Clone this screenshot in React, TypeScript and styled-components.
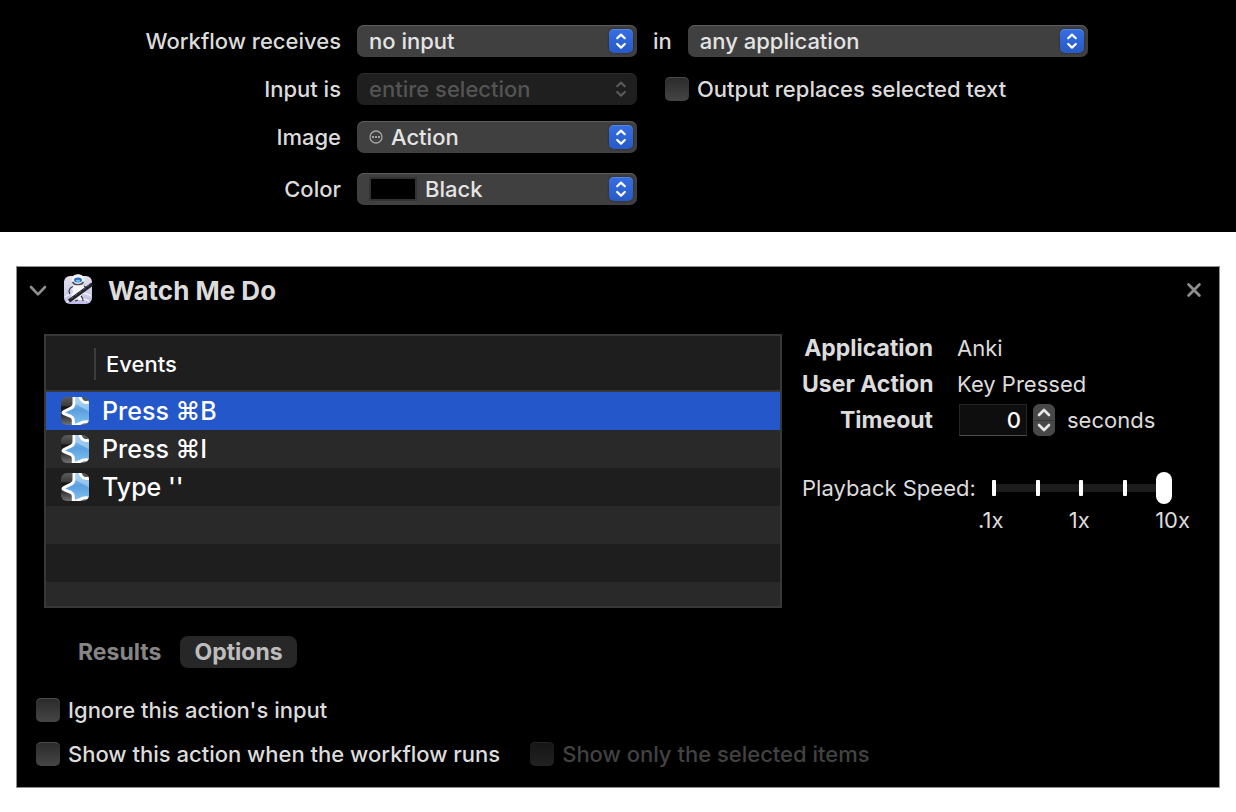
import React, { useState } from "react";
import styled, { createGlobalStyle, css } from "styled-components";

const GlobalStyle = createGlobalStyle`
  *, *::before, *::after { box-sizing: border-box; }
  body {
    margin: 0;
    background: #ffffff;
    color: #dcdcdc;
    font-family: Inter, "Noto Sans", sans-serif;
    font-size: 22px;
    font-weight: 500;
    line-height: 32px;
  }
  button, input, select { font: inherit; color: inherit; margin: 0; }
`;

/* ---------- Workflow settings ---------- */

const Settings = styled.section`
  display: flex;
  flex-direction: column;
  gap: 16px;
  padding: 25px 16px 27px 0;
  background: #000000;
`;

const SettingRow = styled.div<{ $spaced?: boolean }>`
  display: grid;
  grid-template-columns: 341px 280px 1fr;
  column-gap: 16px;
  align-items: center;
  margin-top: ${(p) => (p.$spaced ? "4px" : "0")};
`;

const SettingLabel = styled.label`
  text-align: right;
  white-space: nowrap;
`;

const InlineGroup = styled.div<{ $indent?: boolean }>`
  display: flex;
  align-items: center;
  gap: 16px;
  padding-left: ${(p) => (p.$indent ? "12px" : "0")};
`;

const PopUp = styled.div<{ $wide?: boolean }>`
  position: relative;
  width: ${(p) => (p.$wide ? "400px" : "280px")};
`;

const PopUpSelect = styled.select<{ $inset: number }>`
  appearance: none;
  display: block;
  width: 100%;
  height: 32px;
  padding: 0 40px 0 ${(p) => p.$inset}px;
  border: 0;
  border-radius: 7px;
  background: #404040;
  box-shadow: inset 0 1px 0 #5e5e5e;
  color: #e4e4e4;
  line-height: 32px;
  &:disabled {
    background: #1f1f1f;
    box-shadow: inset 0 1px 0 #2c2c2c;
    color: #545454;
    opacity: 1;
  }
`;

const PopUpBadge = styled.span<{ $disabled?: boolean }>`
  position: absolute;
  top: 4px;
  right: 4px;
  width: 24px;
  height: 24px;
  border-radius: 5px;
  pointer-events: none;
  color: #5a5a5a;
  ${(p) =>
    !p.$disabled &&
    css`
      color: #ffffff;
      background: linear-gradient(#366ee2, #275ac6);
      box-shadow: inset 0 1px 0 #5586e6, 0 0 2px #202020;
    `}
  svg { display: block; }
`;

const PopUpAdornment = styled.span`
  position: absolute;
  top: 0;
  left: 12px;
  height: 32px;
  display: flex;
  align-items: center;
  pointer-events: none;
`;

const Swatch = styled.span`
  width: 48px;
  height: 24px;
  border: 2px solid #333333;
  background: #000000;
`;

/* ---------- Action card ---------- */

const Card = styled.section`
  margin: 34px 16px 24px;
  padding-bottom: 17px;
  border: 1px solid #8e8e8e;
  background: #000000;
`;

const CardHeader = styled.header`
  display: flex;
  align-items: center;
  height: 48px;
  padding: 0 15px 0 11px;
`;

const IconButton = styled.button`
  display: flex;
  padding: 0;
  border: 0;
  background: none;
  color: #8f8f8f;
`;

const AppIcon = styled.span`
  display: flex;
  margin: 0 15px;
`;

const CardTitle = styled.h2`
  flex: 1;
  margin: 0;
  font-size: 26px;
  font-weight: 700;
`;

const CardBody = styled.div`
  display: flex;
  align-items: flex-start;
  gap: 20px;
  padding: 17px 0 0 27px;
`;

const TableFrame = styled.div`
  flex: 1;
  display: grid;
  padding-top: 2px;
`;

const EventTable = styled.table`
  border: 2px solid #383838;
  border-spacing: 0;
  table-layout: fixed;
  color: #ffffff;
`;

const HeadCell = styled.th<{ $width?: number }>`
  width: ${(p) => (p.$width ? `${p.$width}px` : "auto")};
  height: 56px;
  padding: 2px 0 0;
  border-bottom: 2px solid #383838;
  background: #1e1e1e;
  font-weight: inherit;
  text-align: left;
`;

const HeadLabel = styled.span`
  display: block;
  padding-left: 10px;
  border-left: 2px solid #3c3c3c;
  margin-left: -2px;
`;

const EventRow = styled.tr<{ $selected?: boolean; $short?: boolean }>`
  height: ${(p) => (p.$short ? "24px" : "38px")};
  background: #1e1e1e;
  font-size: 25px;
  &:nth-child(even) { background: #292929; }
  ${(p) => p.$selected && css`&&& { background: #2457ca; }`}
`;

const EventCell = styled.td<{ $icon?: boolean }>`
  padding: 0 0 0 ${(p) => (p.$icon ? "15px" : "6px")};
  svg { display: block; }
`;

const Details = styled.div`
  width: 417px;
  font-weight: 400;
`;

const DetailGrid = styled.div`
  display: grid;
  grid-template-columns: 131px 1fr;
  column-gap: 24px;
  row-gap: 4px;
  padding-bottom: 36px;
`;

const DetailLabel = styled.label`
  font-size: 23px;
  font-weight: 700;
  text-align: right;
  white-space: nowrap;
`;

const TimeoutGroup = styled.div`
  display: flex;
  align-items: center;
  padding-left: 2px;
`;

const NumberField = styled.input`
  width: 68px;
  height: 32px;
  padding: 0 5px;
  border: 1px solid #262626;
  border-bottom-color: #4c4c4c;
  background: #0e0e0e;
  color: #ffffff;
  font-weight: 500;
  text-align: right;
`;

const Stepper = styled.div`
  display: flex;
  flex-direction: column;
  width: 22px;
  height: 32px;
  margin: 0 12px 0 6px;
  border-radius: 7px;
  overflow: hidden;
  background: #484848;
`;

const StepButton = styled.button`
  display: flex;
  justify-content: center;
  align-items: center;
  height: 16px;
  padding: 0;
  border: 0;
  background: #484848;
  color: #e6e6e6;
  & + & { box-shadow: inset 0 1px 0 #363636; }
`;

const SpeedRow = styled.div`
  display: flex;
  align-items: center;
`;

const SpeedLabel = styled.label`
  width: 190px;
  white-space: nowrap;
`;

const SliderBox = styled.div`
  display: grid;
  align-items: center;
  width: 180px;
  height: 32px;
  & > * { grid-area: 1 / 1; }
`;

const Rail = styled.span`
  height: 8px;
  margin: 0 8px 0 2px;
  background: #1c1c1c;
`;

const Ticks = styled.span`
  display: flex;
  justify-content: space-between;
  margin-right: 2px;
`;

const Tick = styled.span`
  width: 4px;
  height: 16px;
  border-radius: 1px;
  background: #ffffff;
`;

const Slider = styled.input`
  appearance: none;
  width: 100%;
  height: 32px;
  background: transparent;
  &::-webkit-slider-thumb {
    appearance: none;
    width: 16px;
    height: 32px;
    border-radius: 8px;
    background: #ffffff;
  }
`;

const SpeedScale = styled.div`
  display: flex;
  justify-content: space-between;
  width: 212px;
  margin-left: 176px;
`;

const TabBar = styled.div`
  display: flex;
  gap: 5px;
  padding: 28px 0 0 47px;
`;

const Tab = styled.button<{ $active?: boolean }>`
  height: 32px;
  padding: 0 14px;
  border: 0;
  border-radius: 8px;
  background: ${(p) => (p.$active ? "#272727" : "transparent")};
  color: ${(p) => (p.$active ? "#bdbdbd" : "#858585")};
  font-size: 23px;
  font-weight: 700;
`;

const Options = styled.div`
  display: flex;
  flex-direction: column;
  gap: 12px;
  padding: 26px 0 0 19px;
`;

const OptionRow = styled.div`
  display: flex;
  gap: 30px;
`;

const CheckLabel = styled.label<{ $disabled?: boolean }>`
  display: flex;
  align-items: center;
  gap: 8px;
  white-space: nowrap;
  color: ${(p) => (p.$disabled ? "#424242" : "inherit")};
`;

const CheckBox = styled.input`
  appearance: none;
  width: 24px;
  height: 24px;
  border-radius: 5px;
  background: linear-gradient(#2a2a2a, #454545);
  box-shadow: inset 0 1px 0 #4a4a4a;
  &:checked { background: #2f66dc; }
  &:disabled {
    background: linear-gradient(#151515, #222222);
    box-shadow: inset 0 1px 0 #242424;
  }
`;

/* ---------- Icons ---------- */

const UpDown = () => (
  <svg width="24" height="24" viewBox="0 0 24 24" fill="none" stroke="currentColor" strokeWidth="2.2" strokeLinecap="round" strokeLinejoin="round">
    <path d="M8.2 9.2 12 5.6l3.8 3.6M8.2 15l3.8 3.6 3.8-3.6" />
  </svg>
);

const EllipsisCircle = () => (
  <svg width="14" height="14" viewBox="0 0 14 14">
    <circle cx="7" cy="7" r="6" fill="none" stroke="#a5a5a5" strokeWidth="1.3" />
    <g fill="#c4c4c4">
      <circle cx="4" cy="7" r="1" />
      <circle cx="7" cy="7" r="1" />
      <circle cx="10" cy="7" r="1" />
    </g>
  </svg>
);

const Chevron = () => (
  <svg width="20" height="20" viewBox="0 0 20 20" fill="none" stroke="currentColor" strokeWidth="2.6" strokeLinecap="round" strokeLinejoin="round">
    <path d="M3 6l7 7.4 7-7.4" />
  </svg>
);

const Cross = () => (
  <svg width="20" height="20" viewBox="0 0 20 20" fill="none" stroke="currentColor" strokeWidth="2.8" strokeLinecap="round">
    <path d="M4.6 3.6l10.8 10.8M15.4 3.6 4.6 14.4" />
  </svg>
);

const StepArrow = ({ down }: { down?: boolean }) => (
  <svg width="16" height="12" viewBox="0 0 16 12" fill="none" stroke="currentColor" strokeWidth="2.6" strokeLinecap="round" strokeLinejoin="round">
    <path d={down ? "M3 3l5 5 5-5" : "M3 9l5-5 5 5"} />
  </svg>
);

const RobotIcon = () => (
  <svg width="30" height="34" viewBox="0 0 30 34">
    <defs>
      <linearGradient id="robot-bg" x1="0" y1="0" x2="0" y2="1">
        <stop offset="0" stopColor="#e2e2ee" />
        <stop offset="1" stopColor="#bfbde6" />
      </linearGradient>
    </defs>
    <rect x="1" y="2" width="28" height="28" rx="6" fill="url(#robot-bg)" />
    <path d="M2 23c6-5 20-5 26-1M4 28c6-4 17-4 22-1" fill="none" stroke="#efedfb" strokeWidth="1.5" />
    <path d="M9 13c3-3 10-3 13 0l-1 5-3 3 3 5h-6l-2-2-3 3-3-2 3-6z" fill="#f7f7fb" />
    <path d="M10 12.500c-4 1.500-5 5-3 7.500M21 12c1 .5 2 1.500 2.500 2.500M18 22c1 1 2 3 2 5M12 27l3-1" fill="none" stroke="#3a3a46" strokeWidth="1.3" />
    <path d="M8.500 5.500c0-3 3-5.200 6.500-5.200s6.500 2.200 6.500 5.200S18.500 10.500 15 10.500 8.500 8.500 8.500 5.500z" fill="#f4f4f8" />
    <path d="M9.500 7.800c2 3.800 9 3.800 11 0" fill="none" stroke="#4c4c58" strokeWidth="1.4" />
    <ellipse cx="15" cy="6" rx="4" ry="2.5" fill="#2b6fc4" />
    <ellipse cx="15" cy="6.8" rx="2.4" ry="1.1" fill="#6cc3f5" />
    <path d="M6 27 29.500 10" stroke="#22222b" strokeWidth="3.4" />
    <path d="M8 24.600 28 10" stroke="#777783" strokeWidth=".7" strokeDasharray="3 2" />
  </svg>
);

const StarIcon = ({ id }: { id: string }) => (
  <svg width="28" height="28" viewBox="0 0 28 28">
    <defs>
      <linearGradient id={`${id}-dark`} x1="0" y1="0" x2="0" y2="1">
        <stop offset="0" stopColor="#5c5c5c" />
        <stop offset=".3" stopColor="#3c3c3c" />
        <stop offset=".36" stopColor="#141414" />
        <stop offset=".65" stopColor="#303030" />
        <stop offset="1" stopColor="#727272" />
      </linearGradient>
      <linearGradient id={`${id}-blue`} x1="0" y1="0" x2="0" y2="1">
        <stop offset="0" stopColor="#a6d2f2" />
        <stop offset=".5" stopColor="#5a9fe0" />
        <stop offset="1" stopColor="#85c5f2" />
      </linearGradient>
      <clipPath id={`${id}-clip`}>
        <rect width="28" height="28" rx="6" />
      </clipPath>
    </defs>
    <g clipPath={`url(#${id}-clip)`}>
      <rect width="28" height="28" fill={`url(#${id}-dark)`} />
      <path
        d="M13-3V6.500Q13 9.500 10.500 10.800L3 14.500Q1 15.700 3 16.700L10 19.500Q12.300 20.700 12.300 23.500V29L18 26.800 22 25.200Q24.500 24.200 31 25.500V4.500L26 5.500Q22.500 6 20.500 3L17-3z"
        fill={`url(#${id}-blue)`}
        stroke="#ffffff"
        strokeWidth="3"
        strokeLinejoin="round"
      />
      <path d="M14.500 7l13.500 7.500V7.200c-4 .5-7-.5-8.500-3.200L17 .5h-2.500z" fill="#c4e2f7" opacity=".5" />
    </g>
  </svg>
);

/* ---------- Page ---------- */

const events = ["Press ⌘B", "Press ⌘I", "Type ''"];

export default function App() {
  const [selected, setSelected] = useState(0);
  const [timeout, setTimeoutValue] = useState(0);

  return (
    <main>
      <GlobalStyle />
      <Settings>
        <SettingRow>
          <SettingLabel htmlFor="receives">Workflow receives</SettingLabel>
          <PopUp>
            <PopUpSelect id="receives" $inset={12}><option>no input</option></PopUpSelect>
            <PopUpBadge><UpDown /></PopUpBadge>
          </PopUp>
          <InlineGroup>
            <label htmlFor="application">in</label>
            <PopUp $wide>
              <PopUpSelect id="application" $inset={12}><option>any application</option></PopUpSelect>
              <PopUpBadge><UpDown /></PopUpBadge>
            </PopUp>
          </InlineGroup>
        </SettingRow>
        <SettingRow>
          <SettingLabel htmlFor="input-is">Input is</SettingLabel>
          <PopUp>
            <PopUpSelect id="input-is" $inset={12} disabled><option>entire selection</option></PopUpSelect>
            <PopUpBadge $disabled><UpDown /></PopUpBadge>
          </PopUp>
          <InlineGroup $indent>
            <CheckLabel><CheckBox type="checkbox" />Output replaces selected text</CheckLabel>
          </InlineGroup>
        </SettingRow>
        <SettingRow>
          <SettingLabel htmlFor="image">Image</SettingLabel>
          <PopUp>
            <PopUpSelect id="image" $inset={34}><option>Action</option></PopUpSelect>
            <PopUpAdornment><EllipsisCircle /></PopUpAdornment>
            <PopUpBadge><UpDown /></PopUpBadge>
          </PopUp>
        </SettingRow>
        <SettingRow $spaced>
          <SettingLabel htmlFor="color">Color</SettingLabel>
          <PopUp>
            <PopUpSelect id="color" $inset={68}><option>Black</option></PopUpSelect>
            <PopUpAdornment><Swatch /></PopUpAdornment>
            <PopUpBadge><UpDown /></PopUpBadge>
          </PopUp>
        </SettingRow>
      </Settings>

      <Card>
        <CardHeader>
          <IconButton aria-label="Collapse action"><Chevron /></IconButton>
          <AppIcon><RobotIcon /></AppIcon>
          <CardTitle>Watch Me Do</CardTitle>
          <IconButton aria-label="Remove action"><Cross /></IconButton>
        </CardHeader>

        <CardBody>
          <TableFrame>
            <EventTable>
              <thead>
                <tr>
                  <HeadCell $width={50} aria-label="Application" />
                  <HeadCell><HeadLabel>Events</HeadLabel></HeadCell>
                </tr>
              </thead>
              <tbody>
                {events.map((name, i) => (
                  <EventRow key={name} $selected={i === selected} onClick={() => setSelected(i)}>
                    <EventCell $icon><StarIcon id={`star-${i}`} /></EventCell>
                    <EventCell>{name}</EventCell>
                  </EventRow>
                ))}
                <EventRow><EventCell colSpan={2} /></EventRow>
                <EventRow><EventCell colSpan={2} /></EventRow>
                <EventRow $short><EventCell colSpan={2} /></EventRow>
              </tbody>
            </EventTable>
          </TableFrame>

          <Details>
            <DetailGrid>
              <DetailLabel as="span">Application</DetailLabel>
              <span>Anki</span>
              <DetailLabel as="span">User Action</DetailLabel>
              <span>Key Pressed</span>
              <DetailLabel htmlFor="timeout">Timeout</DetailLabel>
              <TimeoutGroup>
                <NumberField
                  id="timeout"
                  inputMode="numeric"
                  value={timeout}
                  onChange={(e) => setTimeoutValue(Number(e.target.value) || 0)}
                />
                <Stepper>
                  <StepButton aria-label="Increase timeout" onClick={() => setTimeoutValue(timeout + 1)}><StepArrow /></StepButton>
                  <StepButton aria-label="Decrease timeout" onClick={() => setTimeoutValue(Math.max(0, timeout - 1))}><StepArrow down /></StepButton>
                </Stepper>
                <span>seconds</span>
              </TimeoutGroup>
            </DetailGrid>
            <SpeedRow>
              <SpeedLabel htmlFor="speed">Playback Speed:</SpeedLabel>
              <SliderBox>
                <Rail />
                <Ticks><Tick /><Tick /><Tick /><Tick /><Tick /></Ticks>
                <Slider id="speed" type="range" min={0} max={4} defaultValue={4} />
              </SliderBox>
            </SpeedRow>
            <SpeedScale><span>.1x</span><span>1x</span><span>10x</span></SpeedScale>
          </Details>
        </CardBody>

        <TabBar>
          <Tab>Results</Tab>
          <Tab $active>Options</Tab>
        </TabBar>
        <Options>
          <OptionRow>
            <CheckLabel><CheckBox type="checkbox" />Ignore this action's input</CheckLabel>
          </OptionRow>
          <OptionRow>
            <CheckLabel><CheckBox type="checkbox" />Show this action when the workflow runs</CheckLabel>
            <CheckLabel $disabled><CheckBox type="checkbox" disabled />Show only the selected items</CheckLabel>
          </OptionRow>
        </Options>
      </Card>
    </main>
  );
}
